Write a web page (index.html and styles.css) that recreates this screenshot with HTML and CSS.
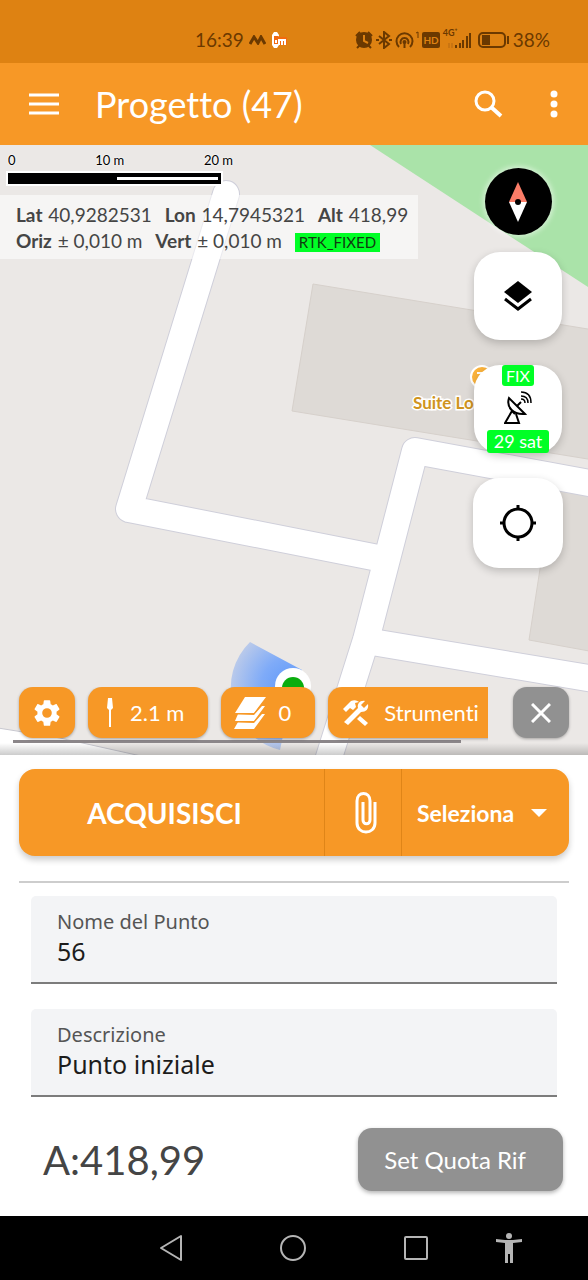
FILE: index.html
```html
<!DOCTYPE html>
<html lang="it">

<head>
  <meta charset="UTF-8">
  <meta name="viewport" content="width=device-width, initial-scale=1.0">
  <title>Progetto (47)</title>
  <link rel="stylesheet" href="styles.css">
</head>

<body>
  <div class="status-bar">
    <div class="status-left">
      <span>16:39</span>
      <svg width="17" height="10" viewBox="0 0 17 10"><path d="M1 9 5 2l4 6 3-6 4 7" fill="none" stroke="#6b3900" stroke-width="3"/></svg>
      <svg width="16" height="16" viewBox="0 0 16 16"><path d="M3 0h3l2 3v10l-2 3H3l-2-3V3z" fill="#fff"/><path d="M3 4h4l2 1h7v8H9l-2-1H3z" fill="#f26a10"/><path d="M4 8h2v3H4z" fill="#fff"/><path d="M8 13V8h6v5M11 8v5" fill="none" stroke="#fff" stroke-width="2"/></svg>
    </div>
    <div class="status-right">
      <svg width="18" height="18" viewBox="0 0 18 18"><circle cx="9" cy="9" r="8" fill="#6b3900"/><path d="M1 5l4-4M17 5l-4-4M2 17l3-3M16 17l-3-3" stroke="#6b3900" stroke-width="2"/><path d="M9 4v6l4 2" fill="none" stroke="#de8212" stroke-width="2"/></svg>
      <svg width="16" height="18" viewBox="0 0 16 18"><path d="M3 5l10 8-5 4V1l5 4L3 13M0 9h3M13 9h3" fill="none" stroke="#6b3900" stroke-width="2"/></svg>
      <svg width="24" height="18" viewBox="0 0 24 18"><g fill="none" stroke="#6b3900" stroke-width="2"><path d="M4 16a8 8 0 1 1 11 0"/><path d="M6 13a4 4 0 1 1 7 0"/><path d="M21 2l2-1v6" stroke-width="1"/></g><circle cx="9.500" cy="11" r="2" fill="#6b3900"/><path d="M9.500 11v6" stroke="#6b3900" stroke-width="2"/></svg>
      <span class="hd">HD</span>
      <span class="signal">
        <span class="net">4G⁺</span>
        <svg width="25" height="17" viewBox="0 0 25 17"><path d="M10 17v-3M14 17V12M17 17V9M21 17V5M24 17V2" stroke="#6b3900" stroke-width="2"/><path d="M3 12v5M6 12v5" stroke="#b66810"/></svg>
      </span>
      <svg class="battery" width="32" height="16" viewBox="0 0 32 16"><rect x="1" y="1" width="26" height="14" rx="4" fill="none" stroke="#6b3900" stroke-width="2"/><path d="M4 3h8v10H4z" fill="#6b3900"/><path d="M30 4v8" stroke="#6b3900" stroke-width="2"/></svg>
      <span>38%</span>
    </div>
  </div>

  <header class="app-bar">
    <button class="icon-btn" aria-label="Menu">
      <svg width="30" height="22" viewBox="0 0 30 22"><path d="M0 2h30M0 11h30M0 20h30" stroke="#fff" stroke-width="3"/></svg>
    </button>
    <h1>Progetto (47)</h1>
    <button class="icon-btn" aria-label="Cerca">
      <svg width="30" height="30" viewBox="0 0 30 30"><circle cx="12" cy="12" r="9" fill="none" stroke="#fff" stroke-width="3"/><path d="M18 18l10 9" stroke="#fff" stroke-width="4"/></svg>
    </button>
    <button class="icon-btn" aria-label="Altro">
      <svg width="8" height="28" viewBox="0 0 8 28"><g fill="#fff"><circle cx="4" cy="4" r="3.500"/><circle cx="4" cy="14" r="3.500"/><circle cx="4" cy="24" r="3.500"/></g></svg>
    </button>
  </header>

  <main class="map">
    <svg class="map-canvas" viewBox="0 0 588 610" preserveAspectRatio="xMinYMin slice">
      <defs>
        <radialGradient id="cone" gradientUnits="userSpaceOnUse" cx="293" cy="543" r="64">
          <stop offset="0" stop-color="#5c97fa"/>
          <stop offset=".5" stop-color="#7fabf8"/>
          <stop offset="1" stop-color="#bccbea"/>
        </radialGradient>
      </defs>
      <rect width="588" height="610" fill="#ebe8e6"/>
      <path d="M370 0H588V142Z" fill="#aae3a9"/>
      <!-- buildings -->
      <g fill="#dedad6" stroke="#d6d0cb">
        <path d="M313 139 600 186V316L292 266Z"/>
        <path d="M553 340 529 495 600 508V340Z"/>
      </g>
      <!-- roads: outline first, then fill -->
      <g fill="none" stroke="#cfcfda" stroke-width="28" stroke-linejoin="round">
        <path d="M226 49 129 364 378 413" stroke-linecap="round"/>
        <path d="M600 340 415 306 366 495 325 625"/>
        <path d="M372 497 600 535"/>
      </g>
      <path d="M-2 583 60 593 150 613H-2Z" fill="#fff" stroke="#c8c8d0"/>
      <g fill="none" stroke="#fff" stroke-width="26" stroke-linejoin="round">
        <path d="M226 49 129 364 378 413" stroke-linecap="round"/>
        <path d="M600 340 415 306 366 495 325 625"/>
        <path d="M372 497 600 535"/>
      </g>
      <!-- place label -->
      <circle cx="482" cy="232" r="11" fill="#fbb33c" stroke="#fff" stroke-width="2"/>
      <path d="M477 228h10l-5 5v6" fill="none" stroke="#fff" stroke-width="2"/>
      <text class="place" x="413" y="264">Suite Lo</text>
      <!-- current position -->
      <path d="M293 543 302 525 250 497A64 64 0 0 0 280 605Z" fill="url(#cone)"/>
      <circle cx="293" cy="541" r="18" fill="#fff"/>
      <circle cx="293" cy="543" r="11" fill="#0aad0e"/>
    </svg>

    <div class="map-top">
      <div class="readout">
        <div class="scale">
          <div class="scale-labels"><span>0</span><span>10 m</span><span>20 m</span></div>
          <div class="scale-bar"></div>
        </div>
        <div class="coords">
          <p><b>Lat</b> 40,9282531 <b>Lon</b> 14,7945321 <b>Alt</b> 418,99</p>
          <p><b>Oriz</b> ± 0,010 m <b>Vert</b> ± 0,010 m <span class="rtk">RTK_FIXED</span></p>
        </div>
      </div>
      <div class="map-buttons">
        <button class="compass" aria-label="Bussola">
          <svg width="20" height="40" viewBox="0 0 20 40"><path d="M10 0l9 20H1z" fill="#fb7d68"/><path d="M10 40l9-20H1z" fill="#fff"/><circle cx="10" cy="20" r="3"/></svg>
        </button>
        <button class="fab" aria-label="Livelli">
          <svg width="28" height="30" viewBox="0 0 28 30"><path d="M14 0l14 11-14 11L0 11z"/><path d="M1 18l13 10 13-10" fill="none" stroke="#000" stroke-width="3"/></svg>
        </button>
        <button class="fab gps" aria-label="Satelliti">
          <span class="badge">FIX</span>
          <svg width="28" height="34" viewBox="0 0 28 34"><g fill="none" stroke="#000" stroke-width="2"><path d="M5 7C2 16 9 24 21 23Z"/><path d="M13 15l4-4M8 20L1 32h14L12 23M8 20l3 3"/><path d="M17 8q4 0 4 4M17 5q7 0 7 7M17 1q10 0 10 11" stroke-width="1.500"/></g></svg>
          <span class="badge sats">29 sat</span>
        </button>
        <button class="fab locate" aria-label="Centra">
          <svg width="36" height="36" viewBox="0 0 36 36"><g fill="none" stroke="#000" stroke-width="3"><circle cx="18" cy="18" r="14"/><path d="M18 0v5M18 31v5M0 18h5M31 18h5"/></g></svg>
        </button>
      </div>
    </div>

    <div class="map-tools">
      <div class="chips">
        <button class="chip chip-square" aria-label="Impostazioni">
          <svg width="32" height="32" viewBox="0 0 24 24"><path fill="#fff" d="M19.140 12.940c.04-.3.060-.61.060-.94 0-.32-.02-.64-.07-.94l2.030-1.580c.18-.14.23-.41.120-.61l-1.920-3.320c-.12-.22-.37-.29-.59-.22l-2.390.96c-.5-.38-1.030-.7-1.620-.94l-.36-2.540c-.04-.24-.24-.41-.48-.41h-3.840c-.24 0-.43.170-.47.410l-.36 2.540c-.59.240-1.130.570-1.620.940l-2.390-.96c-.22-.08-.47 0-.59.220L2.740 8.870c-.12.210-.08.470.12.610l2.030 1.580c-.05.300-.09.630-.09.940s.02.640.07.940l-2.030 1.580c-.18.140-.23.410-.12.610l1.920 3.320c.12.220.37.290.59.220l2.390-.96c.5.380 1.030.7 1.620.940l.36 2.540c.05.240.24.410.48.410h3.840c.24 0 .44-.17.470-.41l.36-2.540c.59-.24 1.130-.56 1.620-.94l2.390.96c.22.080.47 0 .59-.22l1.920-3.320c.12-.22.070-.47-.12-.61zM12 15.600a3.600 3.600 0 1 1 0-7.200 3.600 3.600 0 0 1 0 7.200z"/></svg>
        </button>
        <button class="chip chip-pole">
          <svg width="8" height="30" viewBox="0 0 8 30"><path d="M2 0h4l1 10-2 2v17H3V12l-2-2z" fill="#fff"/></svg>
          <span>2.1 m</span>
        </button>
        <button class="chip chip-count">
          <svg width="32" height="32" viewBox="0 0 32 32"><g fill="#fff"><path d="M11 0h21L20 16H1z"/><path d="M4 17l-3 7h19L31 9h-3l-8 9z"/><path d="M4 25l-4 7h20L31 17h-3l-8 9z"/></g><path d="M1 17h19L31 3M1 25h19l10-12" fill="none" stroke="#f79826"/></svg>
          <span>0</span>
        </button>
        <button class="chip chip-cut">
          <svg width="26" height="26" viewBox="0 0 26 26"><g fill="#fff"><path d="M0 9l8-8c4-2 7 0 8 1l-4 1 1 4-3 3-3-2-4 4z"/><path d="M17 16l8 7-3 3-8-7z"/><path d="M1 22L15 8c-1-4 2-8 7-7l-4 4 3 3 4-4c1 5-2 8-7 8L5 25z"/></g></svg>
          <span>Strumenti</span>
        </button>
      </div>
      <button class="chip chip-square chip-close" aria-label="Chiudi">
        <svg width="20" height="20" viewBox="0 0 20 20"><path d="M1 1l18 18M19 1L1 19" stroke="#fff" stroke-width="3"/></svg>
      </button>
    </div>
  </main>

  <section class="panel">
    <div class="actions">
      <button class="acquire">ACQUISISCI</button>
      <button class="attach" aria-label="Allega">
        <svg width="22" height="42" viewBox="0 0 22 42"><path d="M20 10v21c0 12-18 12-18 0V9c0-10 13-10 13 0v19c0 5-7 5-7 0V10" fill="none" stroke="#fff" stroke-width="3"/></svg>
      </button>
      <div class="picker">
        <select aria-label="Seleziona">
          <option>Seleziona</option>
        </select>
        <svg width="16" height="8" viewBox="0 0 16 8"><path d="M0 0h16L8 8z" fill="#fff"/></svg>
      </div>
    </div>

    <form class="fields">
      <div class="field">
        <label for="point-name">Nome del Punto</label>
        <input type="text" id="point-name" value="56">
      </div>
      <div class="field">
        <label for="point-desc">Descrizione</label>
        <input type="text" id="point-desc" value="Punto iniziale">
      </div>
    </form>

    <div class="altitude">
      <span class="altitude-value">A:418,99</span>
      <button class="set-ref">Set Quota Rif</button>
    </div>
  </section>

  <nav class="nav-bar">
    <div class="nav-main">
      <button class="icon-btn" aria-label="Indietro">
        <svg width="24" height="30" viewBox="0 0 24 30"><path d="M22 3v24L2 15z" fill="none" stroke="#b5b5b5" stroke-width="2" stroke-linejoin="round"/></svg>
      </button>
      <button class="icon-btn" aria-label="Home">
        <svg width="28" height="30" viewBox="0 0 28 30"><circle cx="14" cy="15" r="12" fill="none" stroke="#b5b5b5" stroke-width="2"/></svg>
      </button>
      <button class="icon-btn" aria-label="Recenti">
        <svg width="26" height="28" viewBox="0 0 26 28"><rect x="2" y="3" width="22" height="22" rx="1" fill="none" stroke="#b5b5b5" stroke-width="2"/></svg>
      </button>
    </div>
    <button class="icon-btn" aria-label="Accessibilità">
      <svg width="26" height="30" viewBox="0 0 26 30"><g fill="#b5b5b5"><circle cx="13" cy="3" r="3"/><path d="M0 6l9 1h8l9-1v3l-9 1v20h-3v-9h-2v9H9V10L0 9z"/></g></svg>
    </button>
  </nav>
</body>

</html>
```

FILE: styles.css
```css
* {
  margin: 0;
  padding: 0;
  box-sizing: border-box;
  font-family: Lato, 'Open Sans', sans-serif;
  font-variant-ligatures: none;
}

body {
  display: flex;
  flex-direction: column;
  min-height: 100vh;
  background: #fff;
  color: #454545;
}

button {
  border: 0;
  background: none;
  color: #fff;
  cursor: pointer;
}

svg {
  display: block;
  flex-shrink: 0;
}

/* status bar */
.status-bar {
  display: flex;
  justify-content: space-between;
  height: 63px;
  padding: 16px 38px 0 195px;
  background: #de8212;
  color: #6b3900;
  font-size: 19px;
}

.status-left,
.status-right {
  display: flex;
  align-items: center;
  gap: 5px;
}

.status-right {
  gap: 3px;
}

.hd {
  padding: 0 1px;
  border-radius: 2px;
  background: #6b3900;
  color: #de8212;
  font-size: 10px;
  font-weight: bold;
  line-height: 16px;
}

.signal {
  position: relative;
  padding-left: 3px;
}

.net {
  position: absolute;
  top: -3px;
  left: 0;
  font-size: 9px;
  font-weight: bold;
  line-height: 10px;
}

.battery {
  margin-left: 4px;
}

/* app bar */
.app-bar {
  display: flex;
  align-items: center;
  height: 82px;
  padding: 0 30px 0 29px;
  background: #f79826;
  color: #fff;
}

.app-bar h1 {
  flex: 1;
  padding-left: 36px;
  font-size: 36px;
  font-weight: normal;
}

.app-bar .icon-btn + .icon-btn {
  padding-left: 47px;
}

/* map */
.map {
  position: relative;
  display: flex;
  flex: 1;
  flex-direction: column;
  justify-content: space-between;
  min-height: 610px;
  overflow: hidden;
}

.map::after {
  content: '';
  position: absolute;
  right: 0;
  bottom: 0;
  left: 0;
  height: 12px;
  background: linear-gradient(transparent, rgba(0, 0, 0, 0.2));
}

.map-canvas {
  position: absolute;
  top: 0;
  left: 0;
  width: 100%;
  height: 100%;
}

.place {
  fill: #cf9420;
  stroke: #fff;
  stroke-width: 3px;
  paint-order: stroke;
  font-size: 17px;
  font-weight: bold;
}

.map-top {
  position: relative;
  display: flex;
  justify-content: space-between;
  align-items: flex-start;
}

.readout {
  padding-top: 7px;
}

.scale {
  width: 233px;
  padding-left: 8px;
}

.scale-labels {
  display: flex;
  justify-content: space-between;
  color: #000;
  font-size: 13px;
  line-height: 16px;
  text-shadow: 0 0 2px #fff, 0 0 2px #fff;
}

.scale-bar {
  width: 213px;
  height: 11px;
  margin-top: 5px;
  border: 4px solid #000;
  border-right-width: 3px;
  border-left-width: 109px;
  background: #fff;
  outline: 2px solid #fff;
}

.coords {
  margin-top: 11px;
  padding: 7px 10px 5px 16px;
  background: rgba(255, 255, 255, 0.55);
  font-size: 19px;
  line-height: 26px;
  white-space: nowrap;
}

.coords b {
  margin-right: 1px;
}

.coords b + b {
  margin-left: 8px;
}

.rtk {
  display: inline-block;
  margin-left: 8px;
  padding: 0 4px;
  background: #00ff26;
  color: #103c10;
  font-size: 15px;
  line-height: 19px;
}

.map-buttons {
  display: flex;
  flex-direction: column;
  align-items: center;
  gap: 25px;
  padding: 23px 25px 0 0;
}

.compass {
  display: grid;
  place-items: center;
  width: 67px;
  height: 67px;
  margin-bottom: -8px;
  border-radius: 50%;
  background: #000;
  box-shadow: 0 0 5px 2px rgba(255, 255, 255, 0.5);
}

.fab {
  display: grid;
  place-items: center;
  width: 88px;
  height: 88px;
  border-radius: 26px;
  background: #fff;
  box-shadow: 0 3px 8px rgba(0, 0, 0, 0.2);
}

.locate {
  width: 90px;
  height: 90px;
}

.gps {
  grid-template-rows: auto 1fr auto;
}

.badge {
  padding: 0 4px;
  border-radius: 3px;
  background: #00ff26;
  font-size: 16px;
  line-height: 21px;
}

.sats {
  padding: 0 7px;
  font-size: 18px;
  line-height: 23px;
}

/* tools over the map */
.map-tools {
  position: relative;
  display: flex;
  justify-content: space-between;
  align-items: flex-start;
  padding: 0 19px 12px 13px;
}

.chips {
  display: flex;
  gap: 13px;
  width: 475px;
  padding: 0 0 5px 6px;
  overflow: hidden;
  background: linear-gradient(#8b8689, #8b8689) bottom left / 448px 3px no-repeat;
}

.chip {
  display: flex;
  flex-shrink: 0;
  align-items: center;
  height: 51px;
  border-radius: 14px;
  background: #f79826;
  box-shadow: 0 1px 3px rgba(0, 0, 0, 0.3);
  font-size: 22px;
}

.chip-square {
  justify-content: center;
  width: 56px;
}

.chip-pole {
  gap: 16px;
  padding: 0 24px 0 18px;
}

.chip-count {
  gap: 12px;
  padding: 0 24px 0 13px;
}

.chip-cut {
  gap: 15px;
  padding: 0 24px 0 15px;
}

.chip-close {
  background: #919191;
}

/* bottom panel */
.panel {
  padding: 14px 19px 25px;
}

.actions {
  display: grid;
  grid-template-columns: 305px 78px 1fr;
  height: 87px;
  border-radius: 16px;
  background: #f79826;
  box-shadow: 0 4px 6px rgba(0, 0, 0, 0.2);
}

.acquire {
  padding-right: 14px;
  font-size: 28px;
  font-weight: bold;
}

.attach {
  display: grid;
  place-items: center;
  padding-left: 5px;
  border: solid #df8518;
  border-width: 0 1px;
}

.picker {
  position: relative;
  display: flex;
  align-items: center;
}

.picker select {
  width: 100%;
  height: 100%;
  padding-left: 15px;
  border: 0;
  background: none;
  color: #fff;
  font-size: 23px;
  font-weight: bold;
  appearance: none;
}

.picker svg {
  position: absolute;
  right: 22px;
  pointer-events: none;
}

.fields {
  display: flex;
  flex-direction: column;
  gap: 25px;
  margin-top: 25px;
  padding: 13px 12px 0;
  border-top: 2px solid #cdcdcd;
}

.field {
  display: flex;
  flex-direction: column;
  height: 88px;
  padding: 14px 26px 0;
  border-bottom: 2px solid #7c7c7c;
  border-radius: 5px 5px 0 0;
  background: #f3f4f6;
}

.field label,
.field input {
  font-family: 'Noto Sans', sans-serif;
}

.field label {
  color: #555;
  font-size: 20px;
  line-height: 24px;
}

.field input {
  border: 0;
  outline: 0;
  background: none;
  color: #1c1c1c;
  font-size: 25px;
  line-height: 34px;
}

.altitude {
  display: flex;
  justify-content: space-between;
  align-items: center;
  margin-top: 31px;
  padding: 0 6px 0 24px;
}

.altitude-value {
  font-size: 40px;
}

.set-ref {
  padding: 0 37px 0 26px;
  border-radius: 14px;
  background: #919191;
  box-shadow: 0 2px 4px rgba(0, 0, 0, 0.3);
  font-size: 24px;
  line-height: 63px;
}

/* system navigation */
.nav-bar {
  display: flex;
  justify-content: space-between;
  align-items: center;
  height: 64px;
  padding: 0 66px 0 159px;
  background: #000;
}

.nav-main {
  display: flex;
  align-items: center;
  gap: 96px;
}
```
